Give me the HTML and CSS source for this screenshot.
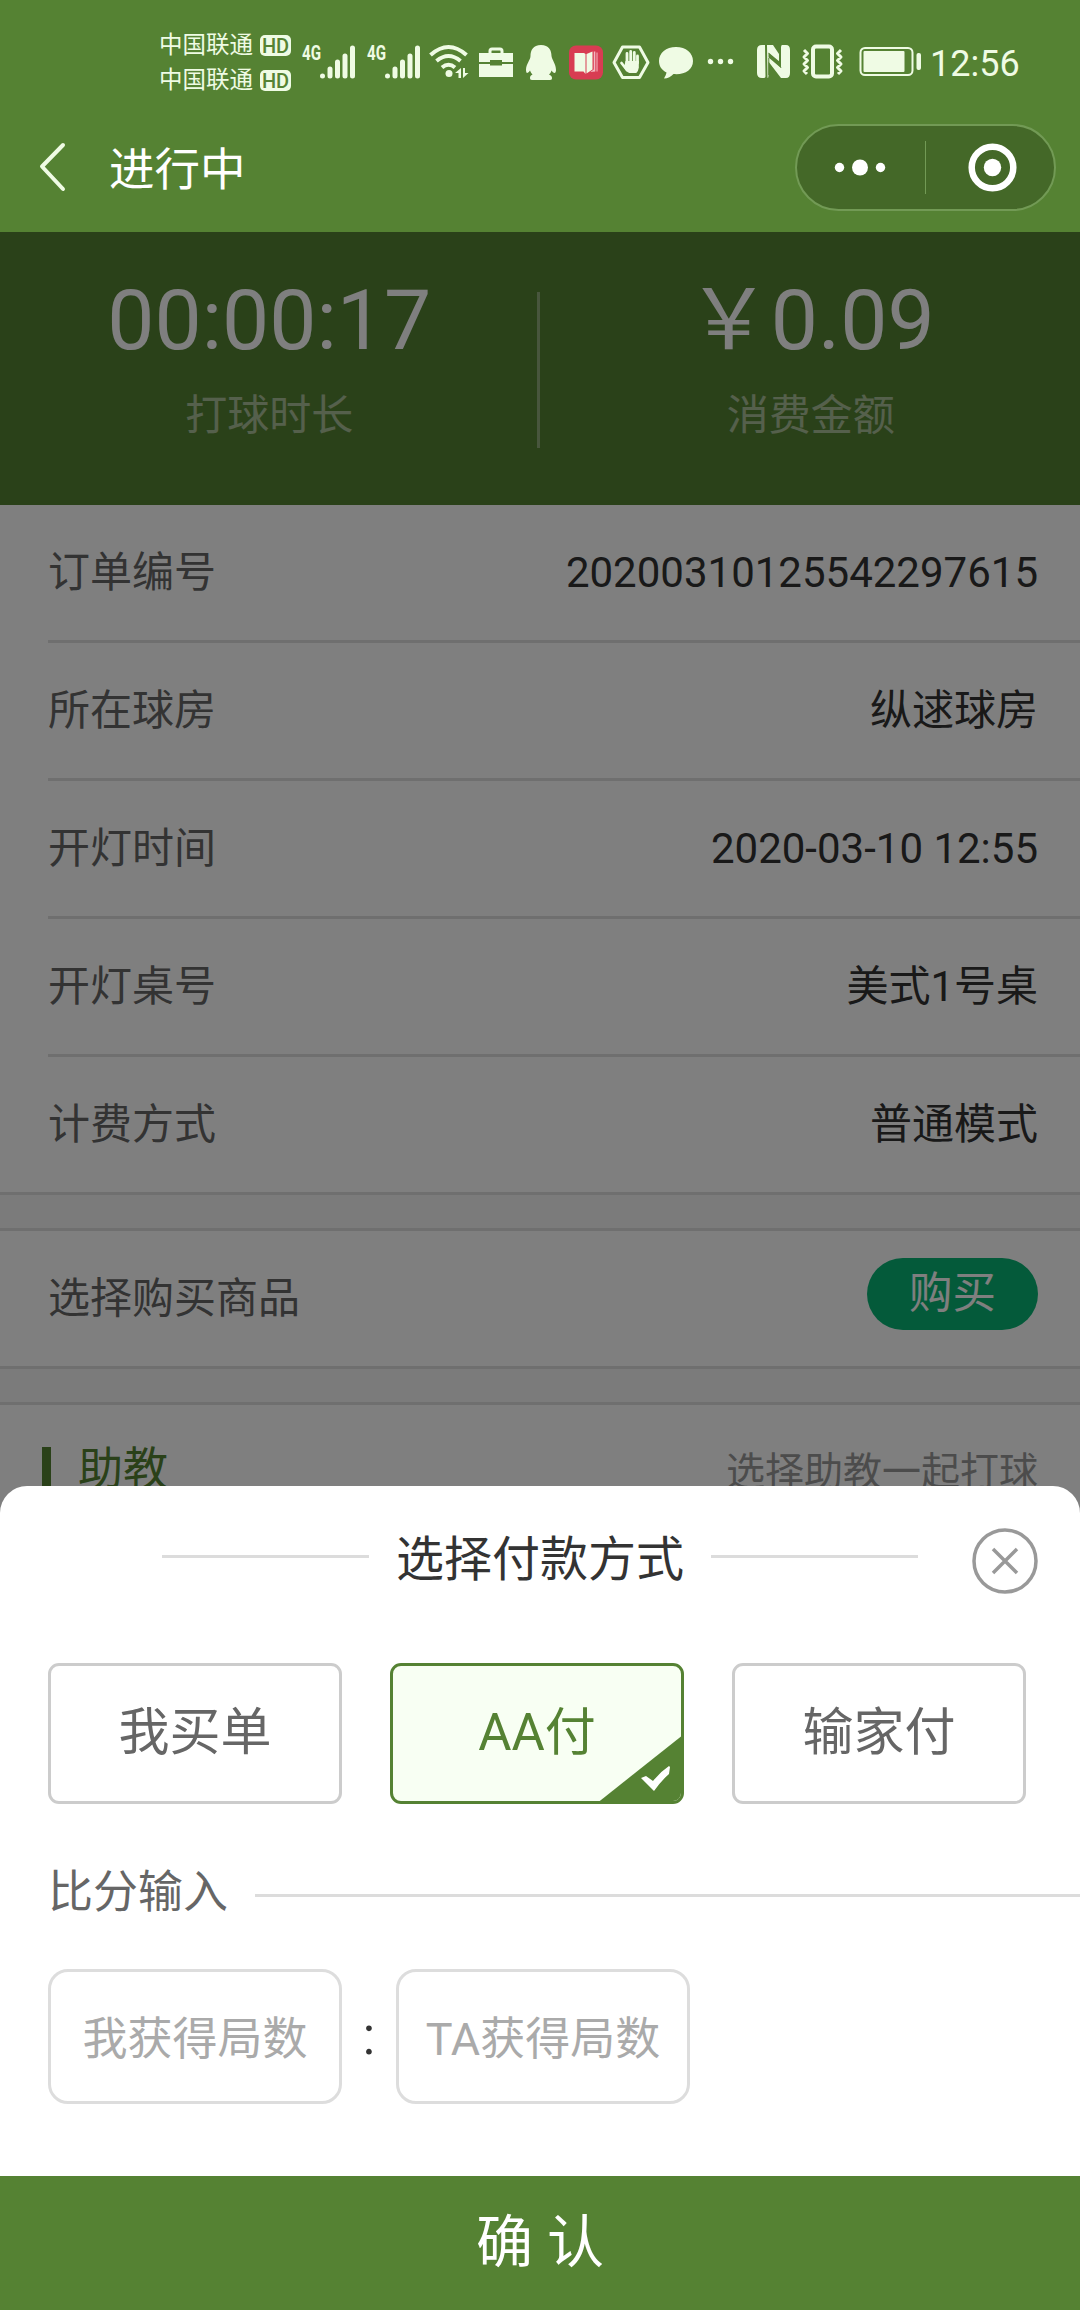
FILE: index.html
```html
<!DOCTYPE html>
<html lang="zh-CN">
<head>
    <meta charset="UTF-8">
    <meta name="viewport" content="width=device-width, initial-scale=1.0">
    <title>进行中</title>
    <link rel="stylesheet" href="styles.css">
</head>
<body>
<div class="screen">
    <header class="header">
        <div class="status-bar">
            <div class="carriers">
                <div class="carrier"><span>中国联通</span><span class="hd">HD</span></div>
                <div class="carrier"><span>中国联通</span><span class="hd">HD</span></div>
            </div>
            <svg width="58" height="36" viewBox="0 0 58 36">
                <text class="net" x="3" y="16" textLength="19" lengthAdjust="spacingAndGlyphs">4G</text>
                <path class="bars" d="M23.500 32v0M31 25v7M38.500 18v14M46 12v20M53.500 4v28"/>
            </svg>
            <svg width="56" height="36" viewBox="0 0 56 36">
                <text class="net" x="2" y="16" textLength="19" lengthAdjust="spacingAndGlyphs">4G</text>
                <path class="bars" d="M22.500 32v0M30 25v7M37.500 18v14M45 12v20M52.500 4v28"/>
            </svg>
            <svg width="41" height="36" viewBox="0 0 41 36">
                <path class="line wifi" d="M1.500 11Q19.500-5 37.500 11M7.500 17Q19.500 7 31.500 17M13 23.500Q19.500 18 26 23.500"/>
                <circle cx="20" cy="29.500" r="3.500"/>
                <path d="M26 29l6-5v10h-2.500v-5zM34 24h2v5h3.500L34 34z"/>
            </svg>
            <svg width="36" height="36" viewBox="0 0 36 36">
                <path class="line" d="M12 9V7q0-2 2-2h8q2 0 2 2v2"/>
                <path d="M1 9h34v9H24v-2H12v2H1zM1 20h11v1.500h12V20h11v13H1z"/>
            </svg>
            <svg width="38" height="36" viewBox="0 0 38 36">
                <path d="M19 1C11 1 8.500 6.500 8.500 12c0 4-4.500 8-4.500 14 0 1 .5 3 1 3 1 0 2-1 3-2.500 1 2.500 1.500 3 2.500 4-2 1-2.500 2-2.500 3.500 0 2 1 2 4 2h14c3 0 4 0 4-2 0-1.500-1-2.500-3-3.500 1-1 2-2 2.500-4 1 1.500 2 2.500 3 2.500 1 0 1.500-2 1.500-3 0-6-4-10-4.500-14C29.500 6.500 27 1 19 1z"/>
            </svg>
            <svg width="36" height="36" viewBox="0 0 36 36">
                <rect class="book-bg" x="1" y="1.500" width="34" height="34" rx="7"/>
                <path d="M6.500 9h9.500l1.500 1v20L15.500 27.500h-9zM18.500 10l6-2.500v18l-6 4z"/>
                <path class="pages" d="M25.800 7.500h1.500v20l-5 .5 3.500-2.500zM28.500 8.500h1v19h-1z"/>
            </svg>
            <svg width="38" height="36" viewBox="0 0 38 36">
                <path class="line" d="M10.500 3h17L36 18.500l-8.500 15h-17L2 18.500z"/>
                <path class="line fingers" d="M15 19V9.500M18.700 18V7.500M22.300 18V8.500M25.500 19v-7M9.500 19l5.500 7"/>
                <path d="M13.500 17h13.300v6.500q-.5 4-2.500 5.500h-7q-3-1-5.300-5.500z"/>
            </svg>
            <svg width="38" height="36" viewBox="0 0 38 36">
                <path d="M18 3C8 3 1 9 1 17c0 5 2.500 9 7.500 11.500-.5 2.500-1.500 4-2.500 6 4 0 7-2 9.500-4.500C26.500 31 35 26 35 17 35 9 28 3 18 3z"/>
            </svg>
            <svg width="34" height="36" viewBox="0 0 34 36">
                <circle cx="6.500" cy="17.500" r="2.700"/><circle cx="16.500" cy="17.500" r="2.700"/><circle cx="26.500" cy="17.500" r="2.700"/>
            </svg>
            <svg class="nfc" width="34" height="36" viewBox="0 0 34 36">
                <path d="M5 1h3l.5 31.500q0 1.500-2 1.500H5q-5 0-5-5V6q0-5 5-5zM10 1h6l7 10.500V18l-11.500-9.500v23q0 2.500-1 2.500zM29 34h-5l-13-17v-4l13 11V3.500q0-2.500 1-2.500h4q4 0 4 5v23q0 5-4 5z"/>
                <path class="gap" d="M22.500 3v16M11.800 14v17M12 9.500l12 14"/>
            </svg>
            <svg width="46" height="36" viewBox="0 0 46 36">
                <rect class="line phone" x="14" y="2.500" width="19" height="30" rx="3"/>
                <path class="line" d="M5 6l3.500 3.500L5 13l3.500 3.500L5 20l3.500 3.500L5 27l3 3M42 6l-3.500 3.500L42 13l-3.500 3.500L42 20l-3.500 3.500L42 27l-3 3"/>
            </svg>
            <svg width="70" height="36" viewBox="0 0 70 36">
                <rect class="line thin" x="7.500" y="4" width="52" height="27" rx="4.500"/>
                <rect x="10.500" y="7" width="41" height="21" rx="1"/>
                <rect x="63.500" y="9" width="4.500" height="17" rx="2"/>
            </svg>
            <span class="clock">12:56</span>
        </div>
        <div class="nav-bar">
            <svg class="back" width="28" height="50" viewBox="0 0 28 50">
                <path d="M25 3L4 24.500 25 47"/>
            </svg>
            <h1>进行中</h1>
            <div class="capsule">
                <svg width="128" height="83" viewBox="0 0 128 83">
                    <circle cx="42.500" cy="41.500" r="4.700"/><circle cx="63" cy="41.500" r="8"/><circle cx="83.500" cy="41.500" r="4.700"/>
                </svg>
                <i class="capsule-line"></i>
                <svg width="128" height="83" viewBox="0 0 128 83">
                    <circle class="ring" cx="66.500" cy="41.500" r="20.800"/><circle cx="66.500" cy="41.500" r="8.700"/>
                </svg>
            </div>
        </div>
    </header>

    <main class="content">
        <section class="stats">
            <div class="stat">
                <div class="stat-value">00:00:17</div>
                <div class="stat-label">打球时长</div>
            </div>
            <div class="stat-line"></div>
            <div class="stat">
                <div class="stat-value">￥0.09</div>
                <div class="stat-label">消费金额</div>
            </div>
        </section>

        <section class="order">
            <div class="row"><span class="label">订单编号</span><span>20200310125542297615</span></div>
            <div class="row"><span class="label">所在球房</span><span>纵逑球房</span></div>
            <div class="row"><span class="label">开灯时间</span><span>2020-03-10 12:55</span></div>
            <div class="row"><span class="label">开灯桌号</span><span>美式1号桌</span></div>
            <div class="row"><span class="label">计费方式</span><span>普通模式</span></div>
        </section>

        <section class="goods">
            <span class="label">选择购买商品</span>
            <button class="buy" type="button">购买</button>
        </section>

        <section class="coach">
            <h2>助教</h2>
            <span>选择助教一起打球</span>
        </section>

        <div class="mask"></div>
    </main>

    <div class="sheet">
        <div class="sheet-title">
            <i></i>
            <h2>选择付款方式</h2>
            <i></i>
            <svg class="close" width="66" height="66" viewBox="0 0 66 66">
                <circle cx="33" cy="33" r="31"/>
                <path d="M21 21l24 24M45 21L21 45"/>
            </svg>
        </div>
        <div class="options">
            <div class="option">我买单</div>
            <div class="option active">
                AA付
                <svg class="corner" width="88" height="70" viewBox="0 0 88 70">
                    <path class="triangle" d="M0 70L88 0v70z"/>
                    <path d="M45 44l5-2 7 5q7-9 16-15l1 1-1 7q-8 7-15 17z"/>
                </svg>
            </div>
            <div class="option">输家付</div>
        </div>
        <div class="score-title"><span>比分输入</span><i></i></div>
        <div class="score">
            <input type="text" placeholder="我获得局数">
            <span class="colon">:</span>
            <input type="text" placeholder="TA获得局数">
        </div>
        <button class="confirm" type="button">确 认</button>
    </div>
</div>
</body>
</html>
```
FILE: styles.css
```css
* {
    box-sizing: border-box;
}
body {
    margin: 0;
    font-family: Roboto, "Noto Sans CJK SC", sans-serif;
    color: #333;
}
h1, h2 {
    margin: 0;
    font-weight: normal;
}
button, input {
    font-family: inherit;
}
svg {
    display: block;
    flex: none;
    overflow: visible;
}
.screen {
    position: relative;
    width: 1080px;
    height: 2310px;
    overflow: hidden;
    background: #f7f7f7;
}

/* header */
.header {
    height: 232px;
    background: #558233;
    color: #fff;
}
.status-bar {
    display: flex;
    align-items: center;
    gap: 8px;
    height: 124px;
    padding-left: 159px;
    color: #effbe4;
    fill: #effbe4;
}
.carriers {
    width: 132px;
    padding-top: 1px;
}
.carrier {
    display: flex;
    align-items: center;
    justify-content: space-between;
    height: 35px;
    font-size: 23.5px;
    line-height: 37px;
}
.hd {
    width: 31px;
    height: 21px;
    border-radius: 5px;
    background: #effbe4;
    color: #558233;
    font-size: 20px;
    font-weight: 500;
    line-height: 22px;
    text-align: center;
}
.net {
    font-size: 21px;
    font-weight: bold;
}
.bars {
    stroke: #effbe4;
    stroke-width: 5;
    stroke-linecap: round;
}
.line {
    fill: none;
    stroke: #effbe4;
    stroke-width: 3;
    stroke-linejoin: round;
}
.wifi {
    stroke-width: 4;
}
.book-bg {
    fill: #d83c52;
}
.pages {
    fill: #f3b9c0;
}
.fingers {
    stroke-width: 2.8;
    stroke-linecap: round;
}
.phone {
    stroke-width: 4;
}
.thin {
    stroke-width: 2;
}
.gap {
    fill: none;
    stroke: #558233;
    stroke-width: 1;
}
.nfc {
    margin-left: 11px;
}
.clock {
    margin-left: -1px;
    padding-top: 3px;
    font-size: 36px;
    line-height: 36px;
}
.nav-bar {
    display: flex;
    align-items: center;
    height: 86px;
    padding: 0 24px 0 38px;
}
.back path {
    fill: none;
    stroke: #effbe4;
    stroke-width: 4;
    stroke-linecap: round;
    stroke-linejoin: round;
}
.nav-bar h1 {
    margin-left: 43px;
    padding-top: 7px;
    font-size: 45.5px;
    line-height: 66px;
}
.capsule {
    display: flex;
    align-items: center;
    width: 261px;
    height: 87px;
    margin-left: auto;
    border: 2px solid #729a55;
    border-radius: 44px;
    background: #446828;
    fill: #fff;
}
.capsule-line {
    flex: none;
    width: 1px;
    height: 53px;
    background: #729a55;
}
.ring {
    fill: none;
    stroke: #fff;
    stroke-width: 6.5;
}

/* page behind the sheet */
.content {
    position: relative;
    height: 2078px;
}
.mask {
    position: absolute;
    inset: 0;
    background: rgba(0, 0, 0, .5);
}
.stats {
    display: flex;
    height: 273px;
    background: #558233;
    color: #fff;
    text-align: center;
}
.stat {
    flex: 1;
    padding-top: 47px;
}
.stat-value {
    font-size: 84px;
    line-height: 84px;
}
.stat-label {
    margin-top: 23px;
    font-size: 42px;
    line-height: 60px;
    opacity: .5;
}
.stat-line {
    width: 3px;
    height: 156px;
    margin: 60px 2px 0 -2px;
    background: rgba(255, 255, 255, .35);
}
.order {
    padding-left: 48px;
    border-bottom: 3px solid #dedede;
    background: #fff;
}
.row, .goods {
    display: flex;
    align-items: center;
    justify-content: space-between;
    height: 138px;
    padding-right: 42px;
    font-size: 42px;
    line-height: 60px;
}
.row {
    border-bottom: 3px solid #dedede;
}
.row:last-child {
    height: 135px;
    border-bottom: none;
}
.label {
    color: #666;
}
.goods {
    height: 141px;
    margin: 33px 0;
    padding-left: 48px;
    border-top: 3px solid #dedede;
    border-bottom: 3px solid #dedede;
    background: #fff;
}
.buy {
    width: 171px;
    height: 72px;
    margin-bottom: 10px;
    padding: 0;
    border: none;
    border-radius: 36px;
    background: #08b474;
    color: #fff;
    font-size: 43.5px;
    line-height: 72px;
}
.coach {
    display: flex;
    justify-content: space-between;
    height: 800px;
    padding: 34px 42px 0;
    border-top: 3px solid #dedede;
    background: #fff;
    color: #999;
    font-size: 39px;
    line-height: 67px;
}
.coach h2 {
    height: 45px;
    margin-top: 8px;
    padding-left: 27px;
    border-left: 9px solid #558233;
    color: #558233;
    font-size: 45px;
    line-height: 45px;
}

/* payment sheet */
.sheet {
    position: absolute;
    left: 0;
    right: 0;
    bottom: 0;
    height: 824px;
    border-radius: 27px 27px 0 0;
    background: #fff;
    overflow: hidden;
}
.sheet i {
    height: 3px;
    background: #dcdcdc;
}
.sheet-title {
    position: relative;
    display: flex;
    align-items: center;
    justify-content: center;
    gap: 27px;
    height: 141px;
}
.sheet-title i {
    width: 207px;
}
.sheet-title h2 {
    padding-top: 6px;
    font-size: 48px;
    line-height: 60px;
}
.close {
    position: absolute;
    top: 42px;
    right: 42px;
    fill: none;
    stroke: #999;
    stroke-width: 3.5;
}
.options {
    display: flex;
    gap: 48px;
    margin-top: 36px;
    padding-left: 48px;
}
.option {
    position: relative;
    width: 294px;
    height: 141px;
    border: 3px solid #ccc;
    border-radius: 11px;
    color: #666;
    font-size: 51px;
    line-height: 133px;
    text-align: center;
    overflow: hidden;
}
.option.active {
    border-color: #558233;
    background: #f8fff3;
    color: #558233;
}
.corner {
    position: absolute;
    right: -3px;
    bottom: -3px;
    fill: #fff;
}
.triangle {
    fill: #558233;
}
.score-title {
    display: flex;
    align-items: center;
    gap: 27px;
    height: 66px;
    margin-top: 58px;
    padding-left: 48px;
    color: #666;
    font-size: 45px;
    line-height: 60px;
}
.score-title span {
    padding-bottom: 4px;
}
.score-title i {
    flex: 1;
}
.score {
    display: flex;
    align-items: center;
    height: 135px;
    margin-top: 41px;
    padding-left: 48px;
}
.score input {
    width: 294px;
    height: 135px;
    padding: 6px 0 0;
    border: 3px solid #ddd;
    border-radius: 20px;
    background: #fff;
    font-size: 45px;
    text-align: center;
}
.score input::placeholder {
    color: #aaa;
}
.colon {
    width: 54px;
    font-size: 51px;
    line-height: 60px;
    text-align: center;
}
.confirm {
    display: block;
    width: 100%;
    height: 134px;
    margin-top: 72px;
    padding: 0;
    border: none;
    background: #558233;
    color: #fff;
    font-size: 57px;
    line-height: 134px;
}
```
